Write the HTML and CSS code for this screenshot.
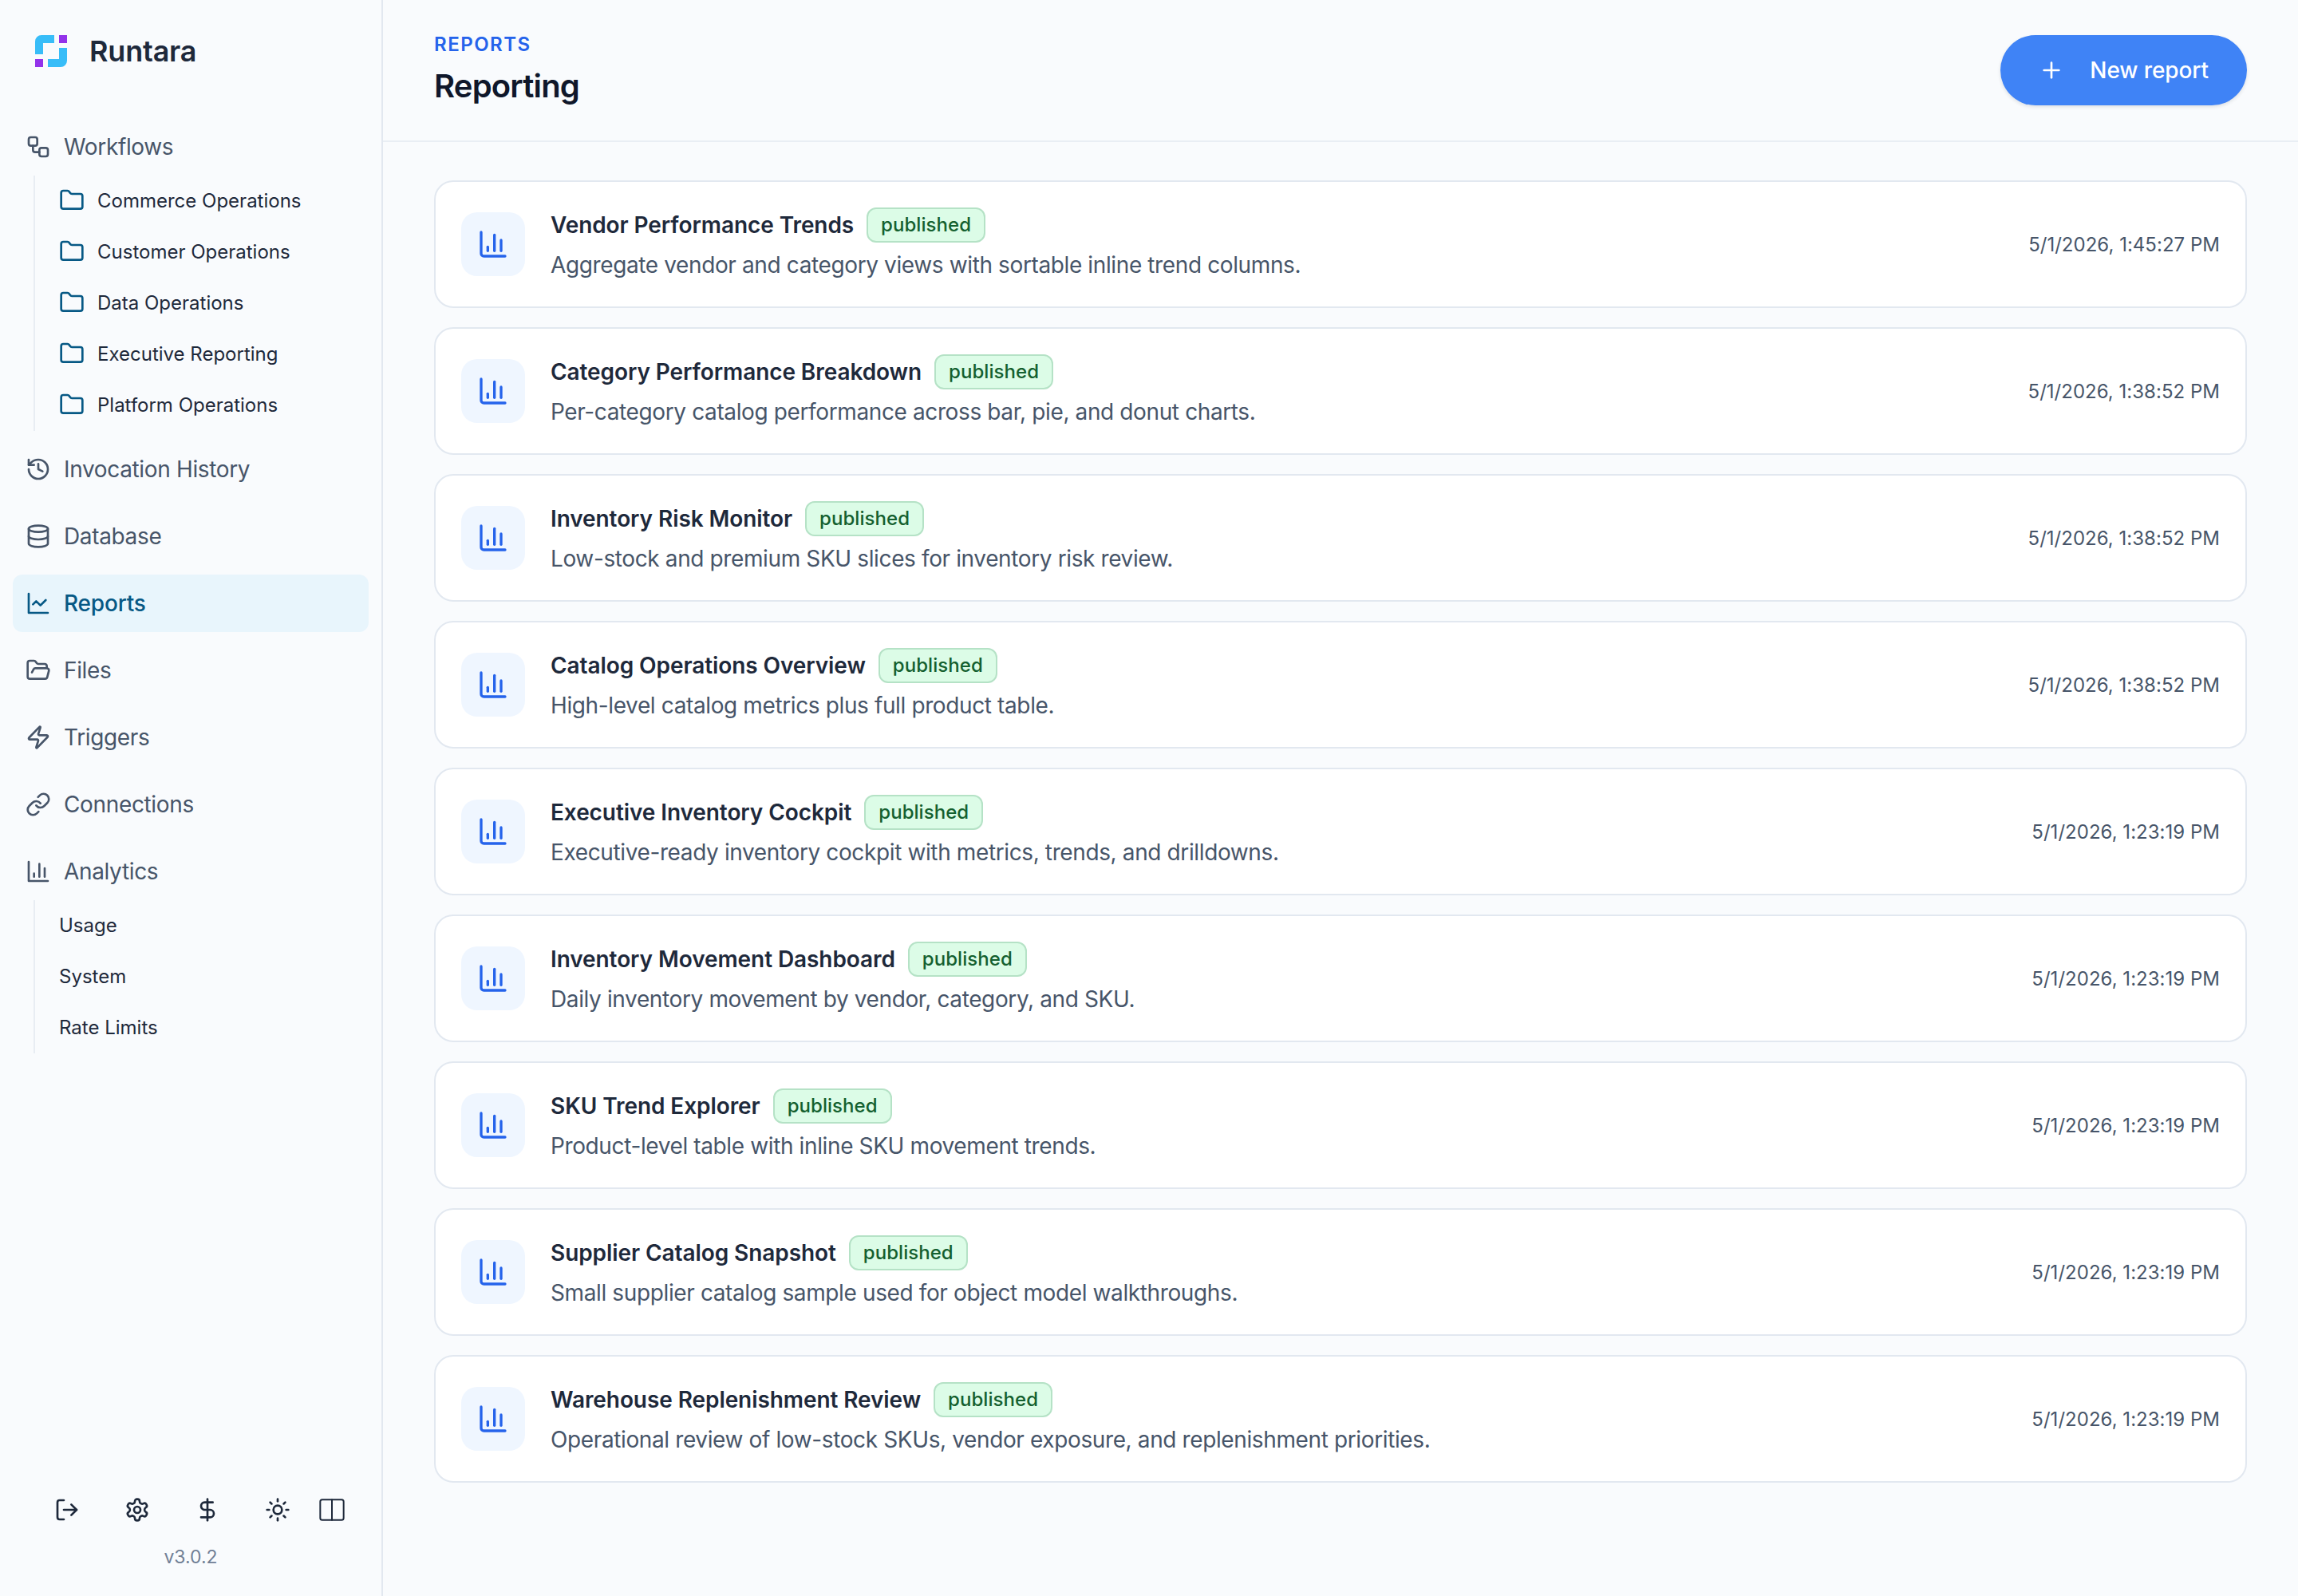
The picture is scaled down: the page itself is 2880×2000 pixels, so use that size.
FILE: index.html
```html
<!DOCTYPE html>
<html lang="en">
<head>
<meta charset="utf-8">
<title>Runtara – Reporting</title>
<link rel="stylesheet" href="styles.css">
</head>
<body>
<svg class="sprite" width="0" height="0" aria-hidden="true">
  <symbol id="i-bars" viewBox="0 0 24 24"><path d="M3 3v16a2 2 0 0 0 2 2h16"/><path d="M18 17V9"/><path d="M13 17V5"/><path d="M8 17v-3"/></symbol>
  <symbol id="i-folder" viewBox="0 0 24 24"><path d="M20 20a2 2 0 0 0 2-2V8a2 2 0 0 0-2-2h-7.9a2 2 0 0 1-1.69-.9L9.6 3.9A2 2 0 0 0 7.93 3H4a2 2 0 0 0-2 2v13a2 2 0 0 0 2 2Z"/></symbol>
</svg>
<div class="app">
  <aside class="sidebar">
    <div class="brand">
      <svg class="logo" viewBox="0 0 40 40"><path class="logo-cyan" d="M0 24V8a8 8 0 0 1 8-8h16v10H10v14Z"/><path class="logo-cyan" d="M40 16v16a8 8 0 0 1-8 8H16V30h14V16Z"/><rect class="logo-purple" x="30" y="0" width="10" height="10"/><rect class="logo-purple" x="0" y="30" width="10" height="10"/></svg>
      <span class="brand-name">Runtara</span>
    </div>
    <nav class="nav">
      <div class="nav-group">
        <a class="nav-item"><svg class="icon" viewBox="0 0 24 24"><rect x="3" y="3" width="8" height="8" rx="2"/><path d="M7 11v4a2 2 0 0 0 2 2h4"/><rect x="13" y="13" width="8" height="8" rx="2"/></svg>Workflows</a>
        <div class="sub-list">
          <a class="sub-item"><svg class="icon folder"><use href="#i-folder"/></svg>Commerce Operations</a>
          <a class="sub-item"><svg class="icon folder"><use href="#i-folder"/></svg>Customer Operations</a>
          <a class="sub-item"><svg class="icon folder"><use href="#i-folder"/></svg>Data Operations</a>
          <a class="sub-item"><svg class="icon folder"><use href="#i-folder"/></svg>Executive Reporting</a>
          <a class="sub-item"><svg class="icon folder"><use href="#i-folder"/></svg>Platform Operations</a>
        </div>
      </div>
      <a class="nav-item"><svg class="icon" viewBox="0 0 24 24"><path d="M3 12a9 9 0 1 0 9-9 9.75 9.75 0 0 0-6.74 2.74L3 8"/><path d="M3 3v5h5"/><path d="M12 7v5l4 2"/></svg>Invocation History</a>
      <a class="nav-item"><svg class="icon" viewBox="0 0 24 24"><ellipse cx="12" cy="5" rx="9" ry="3"/><path d="M3 5V19A9 3 0 0 0 21 19V5"/><path d="M3 12A9 3 0 0 0 21 12"/></svg>Database</a>
      <a class="nav-item active"><svg class="icon" viewBox="0 0 24 24"><path d="M3 3v18h18"/><path d="m19 9-5 5-4-4-3 3"/></svg>Reports</a>
      <a class="nav-item"><svg class="icon" viewBox="0 0 24 24"><path d="m6 14 1.5-2.9A2 2 0 0 1 9.24 10H20a2 2 0 0 1 1.94 2.5l-1.54 6a2 2 0 0 1-1.95 1.5H4a2 2 0 0 1-2-2V5a2 2 0 0 1 2-2h3.9a2 2 0 0 1 1.69.9l.81 1.2a2 2 0 0 0 1.67.9H18a2 2 0 0 1 2 2v2"/></svg>Files</a>
      <a class="nav-item"><svg class="icon" viewBox="0 0 24 24"><path d="M4 14a1 1 0 0 1-.78-1.63l9.9-10.2a.5.5 0 0 1 .86.46l-1.92 6.02A1 1 0 0 0 13 10h7a1 1 0 0 1 .78 1.63l-9.9 10.2a.5.5 0 0 1-.86-.46l1.92-6.02A1 1 0 0 0 11 14z"/></svg>Triggers</a>
      <a class="nav-item"><svg class="icon" viewBox="0 0 24 24"><path d="M10 13a5 5 0 0 0 7.54.54l3-3a5 5 0 0 0-7.07-7.07l-1.72 1.71"/><path d="M14 11a5 5 0 0 0-7.54-.54l-3 3a5 5 0 0 0 7.07 7.07l1.71-1.71"/></svg>Connections</a>
      <div class="nav-group">
        <a class="nav-item"><svg class="icon" viewBox="0 0 24 24"><path d="M3 3v18h18"/><path d="M18 17V9"/><path d="M13 17V5"/><path d="M8 17v-3"/></svg>Analytics</a>
        <div class="sub-list">
          <a class="sub-item">Usage</a>
          <a class="sub-item">System</a>
          <a class="sub-item">Rate Limits</a>
        </div>
      </div>
    </nav>
    <div class="side-footer">
      <div class="tools">
        <button class="tool"><svg class="icon" viewBox="0 0 24 24"><path d="M9 21H5a2 2 0 0 1-2-2V5a2 2 0 0 1 2-2h4"/><path d="m16 17 5-5-5-5"/><path d="M21 12H9"/></svg></button>
        <button class="tool"><svg class="icon" viewBox="0 0 24 24"><path d="M12.22 2h-.44a2 2 0 0 0-2 2v.18a2 2 0 0 1-1 1.73l-.43.25a2 2 0 0 1-2 0l-.15-.08a2 2 0 0 0-2.73.73l-.22.38a2 2 0 0 0 .73 2.73l.15.1a2 2 0 0 1 1 1.72v.51a2 2 0 0 1-1 1.74l-.15.09a2 2 0 0 0-.73 2.73l.22.38a2 2 0 0 0 2.73.73l.15-.08a2 2 0 0 1 2 0l.43.25a2 2 0 0 1 1 1.73V20a2 2 0 0 0 2 2h.44a2 2 0 0 0 2-2v-.18a2 2 0 0 1 1-1.73l.43-.25a2 2 0 0 1 2 0l.15.08a2 2 0 0 0 2.73-.73l.22-.39a2 2 0 0 0-.73-2.73l-.15-.08a2 2 0 0 1-1-1.74v-.5a2 2 0 0 1 1-1.74l.15-.09a2 2 0 0 0 .73-2.73l-.22-.38a2 2 0 0 0-2.73-.73l-.15.08a2 2 0 0 1-2 0l-.43-.25a2 2 0 0 1-1-1.73V4a2 2 0 0 0-2-2z"/><circle cx="12" cy="12" r="3"/></svg></button>
        <button class="tool"><svg class="icon" viewBox="0 0 24 24"><path d="M12 2v20"/><path d="M17 5H9.5a3.5 3.5 0 0 0 0 7h5a3.5 3.5 0 0 1 0 7H6"/></svg></button>
        <button class="tool"><svg class="icon" viewBox="0 0 24 24"><circle cx="12" cy="12" r="4"/><path d="M12 2v2"/><path d="M12 20v2"/><path d="m4.93 4.93 1.41 1.41"/><path d="m17.66 17.66 1.41 1.41"/><path d="M2 12h2"/><path d="M20 12h2"/><path d="m6.34 17.66-1.41 1.41"/><path d="m19.07 4.93-1.41 1.41"/></svg></button>
        <button class="tool tool-panel"><svg class="icon panel" viewBox="0 0 32 28"><rect x="1.33" y="1.33" width="29.33" height="25.33" rx="2.5"/><path d="M16 1.33v25.33"/></svg></button>
      </div>
      <div class="version">v3.0.2</div>
    </div>
  </aside>
  <main class="main">
    <header class="page-head">
      <div class="page-titles">
        <div class="eyebrow">REPORTS</div>
        <h1 class="page-title">Reporting</h1>
      </div>
      <button class="primary"><svg class="icon" viewBox="0 0 24 24"><path d="M5 12h14"/><path d="M12 5v14"/></svg>New report</button>
    </header>
    <section class="report-list">
      <article class="card"><div class="card-icon"><svg class="bars"><use href="#i-bars"/></svg></div><div class="card-body"><div class="card-title"><h2>Vendor Performance Trends</h2><span class="badge">published</span></div><p>Aggregate vendor and category views with sortable inline trend columns.</p></div><time>5/1/2026, 1:45:27 PM</time></article>
      <article class="card"><div class="card-icon"><svg class="bars"><use href="#i-bars"/></svg></div><div class="card-body"><div class="card-title"><h2>Category Performance Breakdown</h2><span class="badge">published</span></div><p>Per-category catalog performance across bar, pie, and donut charts.</p></div><time>5/1/2026, 1:38:52 PM</time></article>
      <article class="card"><div class="card-icon"><svg class="bars"><use href="#i-bars"/></svg></div><div class="card-body"><div class="card-title"><h2>Inventory Risk Monitor</h2><span class="badge">published</span></div><p>Low-stock and premium SKU slices for inventory risk review.</p></div><time>5/1/2026, 1:38:52 PM</time></article>
      <article class="card"><div class="card-icon"><svg class="bars"><use href="#i-bars"/></svg></div><div class="card-body"><div class="card-title"><h2>Catalog Operations Overview</h2><span class="badge">published</span></div><p>High-level catalog metrics plus full product table.</p></div><time>5/1/2026, 1:38:52 PM</time></article>
      <article class="card"><div class="card-icon"><svg class="bars"><use href="#i-bars"/></svg></div><div class="card-body"><div class="card-title"><h2>Executive Inventory Cockpit</h2><span class="badge">published</span></div><p>Executive-ready inventory cockpit with metrics, trends, and drilldowns.</p></div><time>5/1/2026, 1:23:19 PM</time></article>
      <article class="card"><div class="card-icon"><svg class="bars"><use href="#i-bars"/></svg></div><div class="card-body"><div class="card-title"><h2>Inventory Movement Dashboard</h2><span class="badge">published</span></div><p>Daily inventory movement by vendor, category, and SKU.</p></div><time>5/1/2026, 1:23:19 PM</time></article>
      <article class="card"><div class="card-icon"><svg class="bars"><use href="#i-bars"/></svg></div><div class="card-body"><div class="card-title"><h2>SKU Trend Explorer</h2><span class="badge">published</span></div><p>Product-level table with inline SKU movement trends.</p></div><time>5/1/2026, 1:23:19 PM</time></article>
      <article class="card"><div class="card-icon"><svg class="bars"><use href="#i-bars"/></svg></div><div class="card-body"><div class="card-title"><h2>Supplier Catalog Snapshot</h2><span class="badge">published</span></div><p>Small supplier catalog sample used for object model walkthroughs.</p></div><time>5/1/2026, 1:23:19 PM</time></article>
      <article class="card"><div class="card-icon"><svg class="bars"><use href="#i-bars"/></svg></div><div class="card-body"><div class="card-title"><h2>Warehouse Replenishment Review</h2><span class="badge">published</span></div><p>Operational review of low-stock SKUs, vendor exposure, and replenishment priorities.</p></div><time>5/1/2026, 1:23:19 PM</time></article>
    </section>
  </main>
</div>
</body>
</html>
```
FILE: styles.css
```css
* { box-sizing: border-box; }
html, body { margin: 0; height: 100%; }
body {
  background: #f9fbfd;
  color: #1e293b;
  font-family: Inter, "Liberation Sans", sans-serif;
}
.sprite { position: absolute; }
.app { display: flex; height: 2000px; overflow: hidden; }

.icon, .bars {
  fill: none;
  stroke: currentColor;
  stroke-width: 2;
  stroke-linecap: round;
  stroke-linejoin: round;
  flex: none;
}
.icon { width: 32px; height: 32px; }

/* sidebar */
.sidebar {
  width: 480px;
  flex: none;
  display: flex;
  flex-direction: column;
  border-right: 2px solid #e2e8f0;
  padding: 0 16px;
}
.brand { display: flex; align-items: center; gap: 28px; height: 128px; padding-left: 28px; }
.logo { width: 40px; height: 40px; flex: none; }
.logo-cyan { fill: #38bdf8; }
.logo-purple { fill: #9333ea; }
.brand-name { font-size: 36px; line-height: 44px; font-weight: 600; letter-spacing: -0.2px; color: #1e293b; }

.nav { display: flex; flex-direction: column; gap: 12px; padding-top: 20px; }
.nav-item {
  display: flex;
  align-items: center;
  gap: 16px;
  height: 72px;
  padding: 0 16px;
  border-radius: 12px;
  color: #475569;
  font-size: 28px;
  font-weight: 400;
  letter-spacing: -0.35px;
}
.nav-item.active { background: #e8f5fc; color: #075985; font-weight: 500; letter-spacing: -0.2px; }
.sub-list {
  display: flex;
  flex-direction: column;
  gap: 8px;
  margin-left: 26px;
  padding: 4px 0 4px 14px;
  border-left: 2px solid #e8edf3;
}
.sub-item {
  display: flex;
  align-items: center;
  gap: 16px;
  height: 56px;
  padding: 0 16px 2px;
  color: #1e293b;
  font-size: 24px;
}
.folder { color: #075985; }

.side-footer { margin-top: auto; padding-bottom: 31px; display: flex; flex-direction: column; align-items: center; gap: 17px; }
.tools { display: flex; width: 100%; padding-left: 24px; }
.tool {
  width: 88px;
  height: 48px;
  padding: 0;
  border: 0;
  background: none;
  color: #1e293b;
  display: flex;
  align-items: center;
  justify-content: center;
}
.tool-panel { width: 48px; }
.panel { height: 28px; }
.version { font-size: 23px; color: #718096; line-height: 36px; }

/* main */
.main { flex: 1; min-width: 0; display: flex; flex-direction: column; }
.page-head {
  height: 178px;
  padding: 0 64px;
  display: flex;
  align-items: center;
  justify-content: space-between;
  border-bottom: 2px solid #e9eef4;
}
.page-titles { display: flex; flex-direction: column; gap: 8px; }
.eyebrow { font-size: 24px; line-height: 32px; font-weight: 600; letter-spacing: 1.5px; color: #2563eb; }
.page-title { margin: 0; font-size: 40px; line-height: 56px; font-weight: 600; letter-spacing: -0.8px; color: #0f172a; }
.primary {
  display: flex;
  align-items: center;
  gap: 32px;
  height: 88px;
  padding: 0 48px;
  border: 0;
  border-radius: 44px;
  background: #3f83f6;
  color: #fff;
  font: 500 28px Inter, sans-serif;
  letter-spacing: -0.1px;
  box-shadow: 0 2px 4px rgba(15, 23, 42, 0.12);
}

.report-list { display: flex; flex-direction: column; gap: 24px; padding: 48px 64px; }
.card {
  display: flex;
  align-items: center;
  gap: 32px;
  height: 160px;
  padding: 0 32px;
  background: #fff;
  border: 2px solid #e2e8f0;
  border-radius: 24px;
}
.card-icon {
  width: 80px;
  height: 80px;
  flex: none;
  display: flex;
  align-items: center;
  justify-content: center;
  border-radius: 20px;
  background: #eff6ff;
  color: #2563eb;
}
.bars { width: 40px; height: 40px; }
.card-body { flex: 1; min-width: 0; display: flex; flex-direction: column; gap: 6px; padding-top: 2px; }
.card-title { display: flex; align-items: center; gap: 16px; }
.card-title h2 { margin: 0; font-size: 28px; line-height: 44px; font-weight: 600; letter-spacing: -0.08px; color: #1e293b; }
.badge {
  height: 44px;
  padding: 0 16px 1px;
  display: flex;
  align-items: center;
  border: 2px solid #b5e2c6;
  border-radius: 12px;
  background: #dcfce7;
  color: #14602f;
  font-size: 24px;
  font-weight: 500;
  letter-spacing: 0.05px;
}
.card-body p { margin: 0; font-size: 28px; line-height: 44px; letter-spacing: -0.38px; color: #475569; }
time { font-size: 24px; letter-spacing: 0.02px; color: #475569; white-space: nowrap; }
```
